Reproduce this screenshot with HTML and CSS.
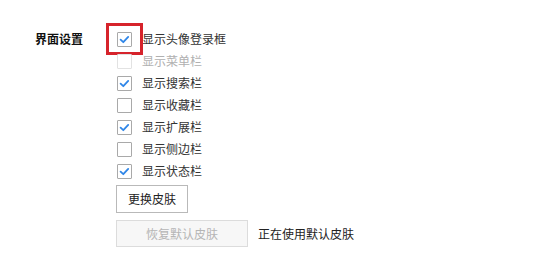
FILE: index.html
```html
<!DOCTYPE html>
<html>
<head>
<meta charset="utf-8">
<link rel="stylesheet" href="styles.css">
</head>
<body>
<div class="section">
  <div class="label">界面设置</div>
  <div class="options">
    <div class="row highlight">
      <span class="box checked"><svg viewBox="0 0 15 15"><path d="M3.6 7.7 L6.3 10.2 L11.2 4.9" /></svg></span>
      <span class="text">显示头像登录框</span>
      <span class="redbox"></span>
    </div>
    <div class="row disabled">
      <span class="box"></span>
      <span class="text">显示菜单栏</span>
    </div>
    <div class="row">
      <span class="box checked"><svg viewBox="0 0 15 15"><path d="M3.6 7.7 L6.3 10.2 L11.2 4.9" /></svg></span>
      <span class="text">显示搜索栏</span>
    </div>
    <div class="row">
      <span class="box"></span>
      <span class="text">显示收藏栏</span>
    </div>
    <div class="row">
      <span class="box checked"><svg viewBox="0 0 15 15"><path d="M3.6 7.7 L6.3 10.2 L11.2 4.9" /></svg></span>
      <span class="text">显示扩展栏</span>
    </div>
    <div class="row">
      <span class="box"></span>
      <span class="text">显示侧边栏</span>
    </div>
    <div class="row">
      <span class="box checked"><svg viewBox="0 0 15 15"><path d="M3.6 7.7 L6.3 10.2 L11.2 4.9" /></svg></span>
      <span class="text">显示状态栏</span>
    </div>
    <div class="buttons">
      <button class="btn">更换皮肤</button>
      <div class="restore-row">
        <button class="btn btn-disabled">恢复默认皮肤</button>
        <span class="status">正在使用默认皮肤</span>
      </div>
    </div>
  </div>
</div>
</body>
</html>
```
FILE: styles.css
```css
html, body {
  margin: 0;
  padding: 0;
  background: #ffffff;
}
body {
  font-family: "Noto Sans CJK SC", "Microsoft YaHei", sans-serif;
  font-size: 12px;
  color: #333333;
}
.section {
  display: flex;
  padding: 28px 0 0 35px;
}
.label {
  width: 81px;
  font-weight: bold;
  color: #111111;
  line-height: 22px;
  height: 22px;
}
.options {
  display: flex;
  flex-direction: column;
}
.row {
  position: relative;
  display: flex;
  align-items: center;
  height: 22px;
}
.box {
  box-sizing: border-box;
  width: 15px;
  height: 15px;
  border: 1px solid #a9a9a9;
  border-radius: 1px;
  background: #fff;
  margin-left: 1px;
  margin-right: 10px;
  display: flex;
  align-items: center;
  justify-content: center;
}
.box svg {
  width: 15px;
  height: 15px;
  flex: none;
  fill: none;
  stroke: #2f86e8;
  stroke-width: 1.8;
  stroke-linecap: round;
  stroke-linejoin: round;
}
.text {
  line-height: 22px;
}
.disabled .box {
  border-color: #e2e2e2;
}
.disabled .text {
  color: #b0b0b0;
}
.redbox {
  position: absolute;
  left: -10px;
  top: -5px;
  width: 31px;
  height: 26px;
  border: 3px solid #d6232b;
}
.buttons {
  display: flex;
  flex-direction: column;
  gap: 7px;
  margin-top: 3px;
}
.btn {
  box-sizing: border-box;
  font-family: inherit;
  font-size: 12px;
  color: #222;
  background: #fff;
  border: 1px solid #b9b9b9;
  border-radius: 0;
  height: 28px;
  padding: 0;
  width: 72px;
  align-self: flex-start;
  line-height: 26px;
}
.restore-row {
  display: flex;
  align-items: center;
  gap: 10px;
}
.btn-disabled {
  width: 132px;
  height: 27px;
  color: #b5b5b5;
  background: #f7f7f7;
  border-color: #dcdcdc;
}
.status {
  color: #222;
}
```
